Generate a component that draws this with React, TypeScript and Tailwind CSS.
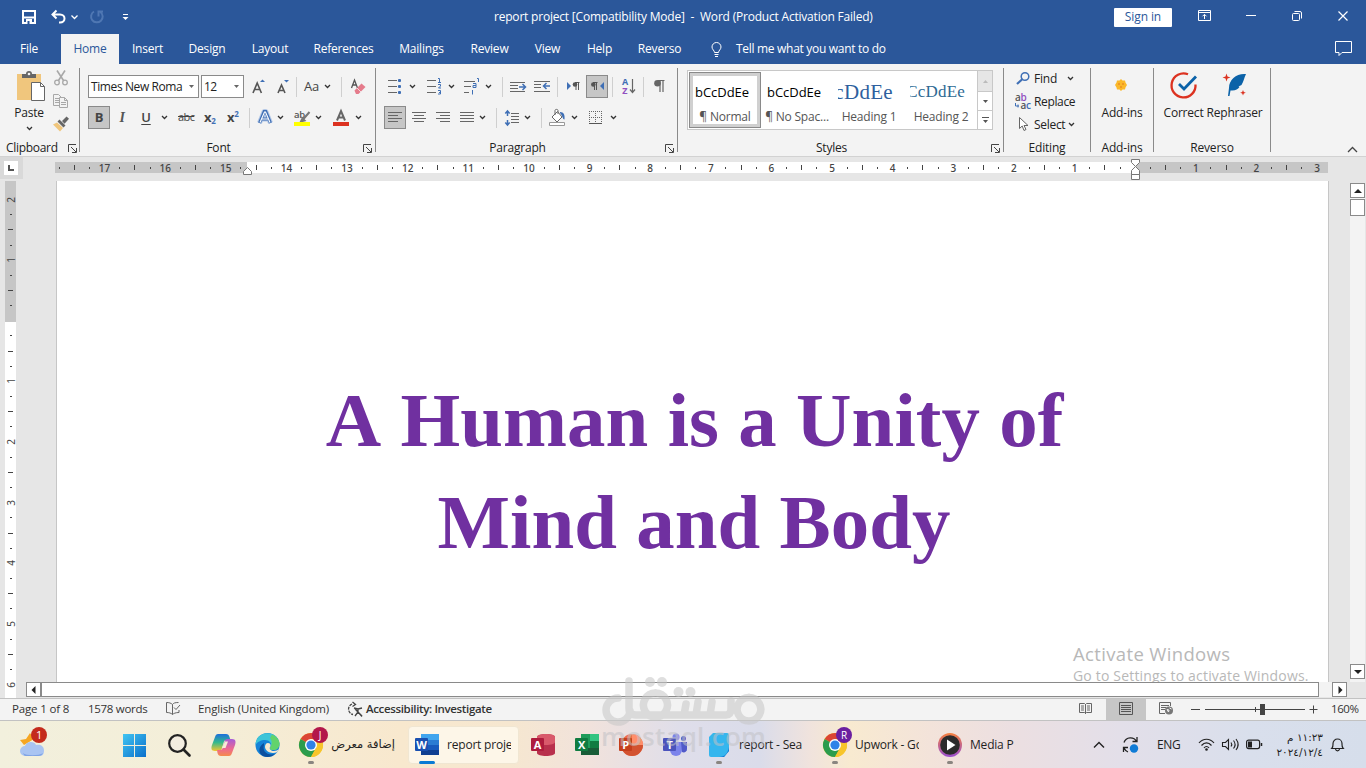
import type { ReactNode } from 'react';
import { clsx } from 'clsx';

interface IconProps {
    w: number;
    h: number;
    className?: string;
    children: ReactNode;
}

function Icon({ w, h, className, children }: IconProps) {
    return (
        <svg width={w} height={h} viewBox={`0 0 ${w} ${h}`} fill="none" className={clsx('shrink-0 overflow-visible', className)}>
            {children}
        </svg>
    );
}

function Chevron({ className }: { className?: string }) {
    return (
        <Icon w={7} h={5} className={className}>
            <path d="M1 1l2.500 2.500L6 1" stroke="#333" strokeWidth="1.300" />
        </Icon>
    );
}

function Sep({ className }: { className?: string }) {
    return <div className={clsx('h-[20px] w-px shrink-0 bg-[#cfcfcf]', className)} />;
}

function GroupEdge() {
    return <div className="mt-[4px] h-[84px] w-px shrink-0 bg-[#8a8a8a]" />;
}

function Launcher({ className }: { className?: string }) {
    return (
        <Icon w={9} h={9} className={className}>
            <path d="M0.500 8V0.500H8M3 3l5 5M8.500 4v4.500H4" stroke="#444" />
        </Icon>
    );
}

function GroupLabel({ text, launcher }: { text: string; launcher?: boolean }) {
    return (
        <div className="mt-auto flex h-[16px] w-full items-center">
            <span className={clsx('flex-1 text-center', launcher && 'pr-[6px]')}>{text}</span>
            {launcher && <Launcher className="mr-[3px]" />}
        </div>
    );
}

function Lines({ rows, className, w = 14 }: { rows: [number, number][]; className?: string; w?: number }) {
    return (
        <Icon w={w} h={13} className={className}>
            {rows.map(([x, width], i) => (
                <path key={i} d={`M${x} ${i * 3 + 1.5}h${width}`} stroke="#666" />
            ))}
        </Icon>
    );
}

const tabs = [
    { label: 'Insert', width: 'w-[29px]' },
    { label: 'Design', width: 'w-[36px]' },
    { label: 'Layout', width: 'w-[36px]' },
    { label: 'References', width: 'w-[57px]' },
    { label: 'Mailings', width: 'w-[45px]' },
    { label: 'Review', width: 'w-[37px]' },
    { label: 'View', width: 'w-[25px]' },
    { label: 'Help', width: 'w-[25px]' },
    { label: 'Reverso', width: 'w-[41px]' },
];

function TitleBar() {
    return (
        <div className="flex h-[34px] items-center text-white">
            <Icon w={14} h={14} className="ml-[22px]">
                <path d="M1 1h12v12H1z" stroke="#fff" strokeWidth="2" />
                <path d="M2 7.500h10" stroke="#fff" strokeWidth="2" />
                <path d="M4 9h6v5H4z" fill="#fff" />
                <path d="M5.500 11h2v3h-2z" fill="#2b579a" />
            </Icon>
            <Icon w={15} h={14} className="ml-[15px]">
                <path d="M5.500 0.500L1.500 4.500l4 4M2 4.500h7c3 0 4.500 2 4.500 4s-1.500 4-4.500 4H8" stroke="#fff" strokeWidth="2" />
            </Icon>
            <Icon w={7} h={5} className="ml-[5px]">
                <path d="M0.500 0.500l3 3 3-3" stroke="#fff" strokeWidth="1.300" />
            </Icon>
            <Icon w={14} h={14} className="ml-[12px]">
                <path d="M4 1.500A5.800 5.800 0 1 0 10.500 2M8.500 6.500V1.500H13" stroke="#4f77b3" strokeWidth="2" />
            </Icon>
            <Icon w={7} h={7} className="ml-[18px]">
                <path d="M1 0.500h5" stroke="#fff" />
                <path d="M0.500 3h6l-3 3z" fill="#fff" />
            </Icon>
            <span className="ml-[365px] w-[379px] whitespace-pre tracking-[-0.205px]">
                report project [Compatibility Mode]  -  Word (Product Activation Failed)
            </span>
            <div className="ml-[241px] flex h-[19px] w-[58px] items-center justify-center rounded-[1px] bg-white tracking-[-0.1px] text-[#2b579a]">
                Sign in
            </div>
            <Icon w={13} h={11} className="mb-[3px] ml-[26px]">
                <path d="M0.500 0.500h12v10H0.500zM0.500 2.500h12M6.500 9V4.500M4.500 6.300l2-2 2 2" stroke="#fff" />
            </Icon>
            <Icon w={10} h={10} className="mb-[3px] ml-[35px]">
                <path d="M0 4.500h10" stroke="#fff" />
            </Icon>
            <Icon w={10} h={10} className="mb-[3px] ml-[36px]">
                <rect x="0.500" y="2.500" width="7" height="7" rx="1" stroke="#fff" />
                <path d="M2.500 0.500H8A1.500 1.500 0 0 1 9.500 2v5.500" stroke="#fff" />
            </Icon>
            <Icon w={10} h={10} className="mb-[3px] ml-[36px]">
                <path d="M0.500 0.500l9 9M9.500 0.500l-9 9" stroke="#fff" strokeWidth="1.200" />
            </Icon>
        </div>
    );
}

function TabRow() {
    return (
        <div className="flex h-[30px] items-center text-white">
            <span className="ml-[20px] flex w-[18px] justify-center">File</span>
            <div className="mr-[-13px] ml-[23px] flex h-full w-[58px] items-center justify-center bg-[#f3f3f3] text-[#2b579a]">Home</div>
            {tabs.map(tab => (
                <span key={tab.label} className={clsx('ml-[27px] flex justify-center whitespace-nowrap', tab.width)}>
                    {tab.label}
                </span>
            ))}
            <Icon w={11} h={15} className="ml-[31px]">
                <path d="M3.500 10.500C3.500 8.500 1 7.500 1 5a4.500 4.500 0 0 1 9 0c0 2.500-2.500 3.500-2.500 5.500zM3.500 12.500h4M4 14.500h3" stroke="#fff" />
            </Icon>
            <span className="ml-[14px] tracking-[-0.3px] whitespace-nowrap">Tell me what you want to do</span>
            <Icon w={17} h={15} className="mr-[14px] mb-[2px] ml-auto">
                <path d="M0.500 0.500h16v11H7l-3 3v-3H0.500z" stroke="#fff" />
            </Icon>
        </div>
    );
}

function ClipboardGroup() {
    return (
        <div className="flex h-full w-[79px] flex-col">
            <div className="flex h-[70px]">
                <div className="ml-[14px] flex w-[30px] flex-col items-center pt-[7px]">
                    <Icon w={30} h={30} className="ml-[3px]">
                        <path d="M1 3h24v26H1z" fill="#f0c67d" />
                        <path d="M6 3h4a3 3 0 0 1 6 0h4v4H6z" fill="#666" />
                        <circle cx="13" cy="3" r="1.300" fill="#f3f3f3" />
                        <path d="M15.500 11.500h9l4 4v14h-13z" fill="#fff" stroke="#666" />
                        <path d="M24.500 11.500v4h4" stroke="#666" />
                    </Icon>
                    <span className="mt-[4px] leading-[16px]">Paste</span>
                    <Chevron className="mt-[5px]" />
                </div>
                <div className="ml-[9px] flex flex-col pt-[6px]">
                    <Icon w={16} h={16}>
                        <path d="M4 0.500l6.500 10M12 0.500L5.500 10.500" stroke="#a8a8a8" strokeWidth="1.600" />
                        <circle cx="4" cy="12.500" r="2.300" stroke="#a8a8a8" strokeWidth="1.300" />
                        <circle cx="12" cy="12.500" r="2.300" stroke="#a8a8a8" strokeWidth="1.300" />
                    </Icon>
                    <Icon w={16} h={16} className="mt-[7px]">
                        <path d="M0.500 1.500h5l3 3v8h-8zM2 5.500h4M2 7.500h4M2 9.500h4" fill="#f3f3f3" stroke="#a8a8a8" />
                        <path d="M6.500 4.500h5l3 3v7h-8zM11.500 4.500v3h3M8 9.500h5M8 11.500h5" fill="#f3f3f3" stroke="#a8a8a8" />
                    </Icon>
                    <Icon w={17} h={16} className="mt-[7px]">
                        <path d="M0 8.500l4-2 6 5.500-3 3.500z" fill="#f0c67d" />
                        <path d="M4.500 5.500l2-2 6 6-2 2zM9 5l4.500-4.500 2.500 2.300-4.500 5z" fill="#666" />
                    </Icon>
                </div>
            </div>
            <div className="mt-auto flex h-[16px] items-center">
                <span className="ml-[6px] w-[51px] tracking-[-0.3px] whitespace-nowrap">Clipboard</span>
                <Launcher className="ml-[11px]" />
            </div>
        </div>
    );
}

function FontGroup() {
    return (
        <div className="flex h-full w-[295px] flex-col pt-[11px]">
            <div className="ml-[8px] flex h-[23px] items-center">
                <div className="flex h-[23px] w-[111px] items-center justify-between border border-[#8a8a8a] bg-white pr-[4px] pl-[2px]">
                    <span className="tracking-[-0.4px] whitespace-nowrap">Times New Roma</span>
                    <Icon w={5} h={3}><path d="M0 0h5L2.500 3z" fill="#666" /></Icon>
                </div>
                <div className="ml-[2px] flex h-[23px] w-[43px] items-center justify-between border border-[#8a8a8a] bg-white pr-[4px] pl-[2px]">
                    <span className="tracking-[-0.6px]">12</span>
                    <Icon w={5} h={3}><path d="M0 0h5L2.500 3z" fill="#666" /></Icon>
                </div>
                <Icon w={14} h={15} className="ml-[8px]">
                    <path d="M1 14l4.200-10 4.200 10M2.500 10.500h5.500" stroke="#555" strokeWidth="1.600" />
                    <path d="M8 3l2.500-2.500L13 3z" fill="#3f6fb5" />
                </Icon>
                <Icon w={14} h={15} className="ml-[11px]">
                    <path d="M1 14l3.500-8L8 14M2.300 11.500h4.500" stroke="#555" strokeWidth="1.600" />
                    <path d="M7 1l2.500 2.500L12 1z" fill="#3f6fb5" />
                </Icon>
                <Sep className="ml-[5px]" />
                <span className="ml-[7px] w-[16px] text-[13px] text-[#444]">Aa</span>
                <Chevron className="ml-[4px]" />
                <Sep className="ml-[10px]" />
                <Icon w={15} h={16} className="ml-[9px]">
                    <path d="M0.500 9L3.500 1l3 8M1.500 6h4" stroke="#555" strokeWidth="1.300" />
                    <path d="M3.500 11.500L10.500 4.500l4 3.500-7 7H5z" fill="#e57b8b" />
                    <path d="M6 9l4 4" stroke="#f3f3f3" strokeWidth="0.800" />
                </Icon>
            </div>
            <div className="mt-[8px] ml-[8px] flex h-[23px] items-center text-[#444]">
                <div className="flex h-[23px] w-[22px] items-center justify-center border border-[#8a8a8a] bg-[#c6c6c6] text-[13px] font-bold">B</div>
                <span className="w-[24px] text-center font-['Liberation_Serif',serif] text-[14px] font-bold italic text-[#555]">I</span>
                <span className="w-[24px] text-center text-[13px] font-semibold underline underline-offset-2">U</span>
                <Chevron className="ml-[3px]" />
                <span className="ml-[10px] w-[18px] text-[11px] tracking-[-0.6px] line-through">abc</span>
                <span className="ml-[8px] flex w-[16px] text-[13px] font-bold">
                    x<span className="mt-[9px] text-[8px] leading-[8px] text-[#3f6fb5]">2</span>
                </span>
                <span className="ml-[7px] flex w-[16px] text-[13px] font-bold">
                    x<span className="mt-[2px] text-[8px] leading-[8px] text-[#3f6fb5]">2</span>
                </span>
                <Sep className="ml-[6px]" />
                <Icon w={16} h={16} className="mb-px ml-[7px]">
                    <path d="M2.500 14L7.200 2.500h1.600l4.700 11.500M4.500 10h7" stroke="#b4c8e6" strokeWidth="5" strokeLinejoin="round" />
                    <path d="M2.500 14L7.200 2.500h1.600l4.700 11.500M4.500 10h7" stroke="#3f6fb5" strokeWidth="3" />
                    <path d="M3 13.500L7.500 3h1l4.500 10.500M4.500 10h7" stroke="#fff" strokeWidth="1.100" />
                </Icon>
                <Chevron className="ml-[4px]" />
                <Icon w={17} h={16} className="ml-[10px]">
                    <text x="0" y="8" fontSize="9.500" fontWeight="600" fill="#555" fontFamily="Open Sans">ab</text>
                    <path d="M15.500 2L9 9.500M8.500 8.500l2 2-3.500 1z" stroke="#777" strokeWidth="2" />
                    <path d="M0 12h16v4H0z" fill="#ff0" />
                </Icon>
                <Chevron className="ml-[4px]" />
                <Icon w={16} h={16} className="ml-[11px]">
                    <path d="M4 10.500L8 1l4 9.500M5.500 7.500h5" stroke="#666" strokeWidth="2" />
                    <path d="M0 12h16v4H0z" fill="#dc3220" />
                </Icon>
                <Chevron className="ml-[6px]" />
            </div>
            <GroupLabel text="Font" launcher />
        </div>
    );
}

function ParagraphGroup() {
    return (
        <div className="flex h-full w-[301px] flex-col pt-[11px]">
            <div className="ml-[8px] flex h-[23px] items-center">
                <Icon w={16} h={17} className="ml-[4px]">
                    <path d="M0 2.500h9M0 8.500h9M0 14.500h9" stroke="#666" />
                    <path d="M10 1.500h3v2h-3zM10.500 1h2v3h-2zM10 7.500h3v2h-3zM10.500 7h2v3h-2zM10 13.500h3v2h-3zM10.500 13h2v3h-2z" fill="#3f6fb5" />
                </Icon>
                <Chevron className="ml-[5px]" />
                <Icon w={16} h={17} className="ml-[11px]">
                    <path d="M0 2.500h9M0 8.500h9M0 14.500h9" stroke="#666" />
                    <path d="M11 0.500h1.500V4.500M11 4.500h3M11 6.500h2.500v1.500l-2 2h2.500M11 12.500h2.500v3.500h-2.500M12 14.500h1.500" stroke="#3f6fb5" />
                </Icon>
                <Chevron className="ml-[5px]" />
                <Icon w={17} h={17} className="ml-[9px]">
                    <path d="M0 3.500h11M0 8.500h7M0 14.500h5" stroke="#666" />
                    <path d="M13 0.500h1.500V4M9 5.500h3v4H9v-2h3M8.500 12v4.500" stroke="#3f6fb5" />
                </Icon>
                <Chevron className="ml-[4px]" />
                <Sep className="ml-[10px]" />
                <Icon w={17} h={13} className="ml-[7px]">
                    <path d="M0 2.500h15M0 5.500h8M0 8.500h8M0 11.500h15" stroke="#666" />
                    <path d="M9 7h6M12.500 4l3 3-3 3" stroke="#3f6fb5" strokeWidth="1.500" />
                </Icon>
                <Icon w={17} h={13} className="ml-[7px]">
                    <path d="M0 1.500h16M0 4.500h7M0 7.500h7M0 11.500h16" stroke="#666" />
                    <path d="M10 6h6M12.500 3l-3 3 3 3" stroke="#3f6fb5" strokeWidth="1.500" />
                </Icon>
                <Sep className="ml-[6px]" />
                <Icon w={14} h={9} className="ml-[9px]">
                    <path d="M0 0v8l4-4z" fill="#3f6fb5" />
                    <path d="M12.500 0.500H8M9 0v8M11.500 0v8" stroke="#555" />
                    <circle cx="8" cy="2.500" r="2.300" fill="#555" />
                </Icon>
                <div className="ml-[5px] flex h-[23px] w-[22px] items-center justify-center border border-[#8a8a8a] bg-[#c6c6c6]">
                    <Icon w={13} h={9}>
                        <path d="M13 0v8L9 4z" fill="#3f6fb5" />
                        <path d="M6.500 0.500H2M3.500 0v8M5.500 0v8" stroke="#555" />
                        <circle cx="2.300" cy="2.500" r="2.300" fill="#555" />
                    </Icon>
                </div>
                <Sep className="ml-[4px]" />
                <Icon w={14} h={16} className="mb-px ml-[9px]">
                    <text x="0" y="7" fontSize="9" fontWeight="700" fill="#3f6fb5" fontFamily="Open Sans">A</text>
                    <text x="0.200" y="15.500" fontSize="9" fontWeight="700" fill="#9150c0" fontFamily="Open Sans">Z</text>
                    <path d="M10.500 1v13M8 11.500l2.500 3 2.500-3" stroke="#666" strokeWidth="1.200" />
                </Icon>
                <Sep className="ml-[7px]" />
                <Icon w={11} h={13} className="ml-[10px]">
                    <path d="M10.500 0.500H4M6 0v12M9 0v12" stroke="#666" strokeWidth="1.200" />
                    <circle cx="3.500" cy="3.300" r="3.300" fill="#666" />
                </Icon>
            </div>
            <div className="mt-[8px] ml-[8px] flex h-[23px] items-center">
                <div className="flex h-[23px] w-[22px] items-center justify-center border border-[#8a8a8a] bg-[#c6c6c6]">
                    <Lines rows={[[0, 14], [0, 10], [0, 14], [0, 10]]} />
                </div>
                <Lines className="ml-[6px]" rows={[[0, 14], [2, 10], [0, 14], [2, 10]]} />
                <Lines className="ml-[10px]" rows={[[0, 14], [4, 10], [0, 14], [4, 10]]} />
                <Lines className="ml-[10px]" rows={[[0, 14], [0, 14], [0, 14], [0, 14]]} />
                <Chevron className="ml-[5px]" />
                <Sep className="ml-[10px]" />
                <Icon w={15} h={16} className="ml-[8px]">
                    <path d="M2.500 1v5M2.500 10v5M0.300 3.500l2.200-2.500 2.200 2.500M0.300 12.500l2.200 2.500 2.200-2.500" stroke="#3f6fb5" strokeWidth="1.500" />
                    <path d="M6 3.500h8M6 6.500h8M6 9.500h8M6 12.500h8" stroke="#666" />
                </Icon>
                <Chevron className="ml-[4px]" />
                <Sep className="ml-[10px]" />
                <Icon w={17} h={17} className="ml-[7px]">
                    <path d="M3 8l5.500-5.500L13 8l-5 5zM6 6V1.500c0-1.500 3-1.500 3 0V5" stroke="#666" fill="#fff" />
                    <path d="M11 3c4 0 5 3 4.500 7.500-2 0-1.500-3.500-4.500-6.500z" fill="#3f6fb5" />
                    <path d="M0.500 13.500h15v3H0.500z" fill="#fff" stroke="#999" />
                </Icon>
                <Chevron className="ml-[5px]" />
                <Icon w={13} h={14} className="ml-[11px]">
                    <path d="M0.500 0v12M6.500 0v12M12.500 0v12M0 0.500h13M0 6.500h13" stroke="#666" strokeDasharray="1 1" />
                    <path d="M0 12.500h13" stroke="#555" />
                </Icon>
                <Chevron className="ml-[8px]" />
            </div>
            <GroupLabel text="Paragraph" launcher />
        </div>
    );
}

const styleItems = [
    { preview: 'bCcDdEe', label: '¶ Normal', look: 'text-[13px] text-black tracking-[-0.05px]' },
    { preview: 'bCcDdEe', label: '¶ No Spac...', look: 'text-[13px] text-black tracking-[-0.05px]' },
    { preview: 'cDdEe', label: 'Heading 1', look: "font-['Liberation_Serif',serif] text-[21px] text-[#2e5f9e] tracking-[0.3px]" },
    { preview: 'CcDdEe', label: 'Heading 2', look: "font-['Liberation_Serif',serif] text-[17px] text-[#2e6a94] tracking-[0.2px]" },
];

function StylesGroup() {
    return (
        <div className="flex h-full w-[325px] flex-col pt-[6px]">
            <div className="ml-[9px] flex h-[60px] w-[306px] border border-[#c8c8c8] bg-white">
                {styleItems.map((item, i) => (
                    <div
                        key={item.label}
                        className={clsx(
                            'mt-px flex h-[56px] w-[72px] shrink-0 flex-col items-center border',
                            i === 0 ? 'ml-px border-[#8a8a8a] shadow-[inset_0_0_0_3px_#d0d0d0]' : 'border-transparent',
                        )}
                    >
                        <div className="mt-[6px] ml-[4px] flex h-[26px] w-[55px] items-center justify-end self-start overflow-hidden whitespace-nowrap">
                            <span className={clsx('leading-[26px]', item.look)}>{item.preview}</span>
                        </div>
                        <span className="pt-[2px] leading-[20px] whitespace-nowrap text-[#555]">{item.label}</span>
                    </div>
                ))}
                <div className="ml-auto flex w-[15px] flex-col border-l border-[#c8c8c8]">
                    <div className="flex h-[20px] items-center justify-center bg-[#e6e6e6]">
                        <Icon w={5} h={3}><path d="M0 3h5L2.500 0z" fill="#bbb" /></Icon>
                    </div>
                    <div className="flex h-[20px] items-center justify-center border-y border-[#c8c8c8]">
                        <Icon w={5} h={3}><path d="M0 0h5L2.500 3z" fill="#555" /></Icon>
                    </div>
                    <div className="flex h-[18px] items-center justify-center">
                        <Icon w={7} h={6}><path d="M0 0h7v1H0zM1 3h5L3.500 6z" fill="#555" /></Icon>
                    </div>
                </div>
            </div>
            <GroupLabel text="Styles" launcher />
        </div>
    );
}

function EditingGroup() {
    return (
        <div className="flex h-full w-[86px] flex-col pt-[3px]">
            <div className="flex h-[23px] items-center">
                <Icon w={14} h={13} className="ml-[12px]">
                    <circle cx="9" cy="4.500" r="3.800" stroke="#3f6fb5" strokeWidth="1.500" />
                    <path d="M6.500 7L1 12" stroke="#3f6fb5" strokeWidth="2.200" />
                </Icon>
                <span className="ml-[4px] w-[23px]">Find</span>
                <Chevron className="ml-[10px]" />
            </div>
            <div className="flex h-[23px] items-center">
                <Icon w={17} h={16} className="ml-[11px]">
                    <text x="0" y="7" fontSize="10" fontWeight="600" fill="#555" fontFamily="Open Sans">a</text>
                    <text x="5.500" y="7" fontSize="10" fontWeight="600" fill="#9150c0" fontFamily="Open Sans">b</text>
                    <text x="5.500" y="14.500" fontSize="10" fontWeight="600" fill="#555" fontFamily="Open Sans">a</text>
                    <text x="11" y="14.500" fontSize="10" fontWeight="600" fill="#3f6fb5" fontFamily="Open Sans">c</text>
                    <path d="M0.500 9v3H4M3 10.500v3" stroke="#3f6fb5" />
                </Icon>
                <span className="ml-[2px] tracking-[-0.35px]">Replace</span>
            </div>
            <div className="flex h-[23px] items-center">
                <Icon w={10} h={15} className="ml-[15px]">
                    <path d="M0.500 0.500v11l2.700-2.500L5 13.500l2-1L5 8.500h4z" fill="#fff" stroke="#666" />
                </Icon>
                <span className="ml-[5px] w-[31px] tracking-[-0.3px]">Select</span>
                <Chevron className="ml-[3px]" />
            </div>
            <GroupLabel text="Editing" />
        </div>
    );
}

function AddInsGroup() {
    return (
        <div className="flex h-full w-[62px] flex-col items-center">
            <div className="flex h-[41px] items-center pr-[2px]">
                <Icon w={12} h={12}>
                    <path d="M6 0l1.500 1.500L10 1.500l.5 2L12 6l-1.500 2.500-.5 2-2.500 0L6 12l-1.500-1.500H2l-.5-2L0 6l1.500-2.500.5-2h2.500z" fill="#fbb829" />
                    <circle cx="4" cy="5" r="0.800" fill="#e2711d" />
                    <circle cx="8" cy="5" r="0.800" fill="#e2711d" />
                    <circle cx="6" cy="8" r="0.800" fill="#e2711d" />
                </Icon>
            </div>
            <span className="leading-[16px]">Add-ins</span>
            <GroupLabel text="Add-ins" />
        </div>
    );
}

function ReversoGroup() {
    return (
        <div className="flex h-full w-[116px] flex-col">
            <div className="flex">
                <div className="ml-[10px] flex w-[39px] flex-col items-center">
                    <Icon w={28} h={27} className="mt-[8px] ml-px">
                        <path d="M25.500 12.500A12 12 0 1 1 18 2.300" stroke="#dc3220" strokeWidth="2.300" />
                        <path d="M9 12l5 5L26 4.500" stroke="#0b62a8" strokeWidth="2.800" />
                    </Icon>
                    <span className="mt-[6px] leading-[16px]">Correct</span>
                </div>
                <div className="ml-[5px] flex w-[53px] flex-col items-center">
                    <Icon w={24} h={25} className="mt-[9px]">
                        <path d="M23 1C14 0 6 6 6 15l-1 8h1.500l1-5.500c5 .5 7-1 9-3.500l-1-.5 3-1.500c2-3 2.500-7 4.500-11z" fill="#0b62a8" />
                        <path d="M3.500 0.500l1 3 3 1-3 1-1 3-1-3-3-1 3-1zM20 17l.8 2 2 .8-2 .8-.8 2-.8-2-2-.8 2-.8z" fill="#dc3220" />
                    </Icon>
                    <span className="mt-[7px] leading-[16px]">Rephraser</span>
                </div>
            </div>
            <GroupLabel text="Reverso" />
        </div>
    );
}

function Ribbon() {
    return (
        <div className="flex h-[93px] border-b border-[#d2d2d2] bg-[#f3f3f3] text-[#222]">
            <ClipboardGroup />
            <GroupEdge />
            <FontGroup />
            <GroupEdge />
            <ParagraphGroup />
            <GroupEdge />
            <StylesGroup />
            <GroupEdge />
            <EditingGroup />
            <GroupEdge />
            <AddInsGroup />
            <GroupEdge />
            <ReversoGroup />
            <GroupEdge />
            <Icon w={11} h={7} className="mr-[8px] mb-[3px] ml-auto self-end">
                <path d="M1 6l4.500-4.500L10 6" stroke="#444" strokeWidth="1.300" />
            </Icon>
        </div>
    );
}

// every fourth mark is a number, 17 down to 0 and then up to 3
const hMarks = Array.from({ length: 84 }, (_, i) => {
    if (i % 4 === 3) return String(Math.abs(17 - (i - 3) / 4));
    return i % 4 === 1 ? 'tick' : 'dot';
});

const vMarks = Array.from({ length: 33 }, (_, i) => {
    if (i % 4 === 0) return String(Math.abs(2 - i / 4));
    return i % 4 === 2 ? 'tick' : 'dot';
});

function HorizontalRuler() {
    return (
        <div className="flex h-[24px] items-start">
            <div className="flex h-[22px] w-[23px] items-center justify-center bg-[#d9d9d9] pr-px">
                <div className="flex h-[14px] w-[14px] items-center justify-center bg-white">
                    <Icon w={6} h={6}><path d="M1 0v5h5" stroke="#555" strokeWidth="2" /></Icon>
                </div>
            </div>
            <div className="relative mt-[5px] ml-[32px] flex h-[11px] w-[1273px] bg-[linear-gradient(90deg,#c6c6c6_192px,#fff_192px,#fff_1080px,#c6c6c6_1080px)]">
                <div className="ml-[-3.500px] flex h-full w-[1274px] items-center">
                    {hMarks.map((mark, i) => (
                        <div key={i} className="flex w-[15.163px] shrink-0 items-center justify-center font-['Noto_Sans','Open_Sans',sans-serif] text-[10px] leading-none font-medium tracking-normal text-[#444]">
                            {mark === 'dot' && <div className="h-[2px] w-px bg-[#444]" />}
                            {mark === 'tick' && <div className="h-[5px] w-px bg-[#444]" />}
                            {mark !== 'dot' && mark !== 'tick' && mark !== '0' && mark}
                        </div>
                    ))}
                </div>
                <Icon w={9} h={8} className="absolute top-[5px] left-[188px]">
                    <path d="M0.500 7.500v-3l4-4 4 4v3z" fill="#fff" stroke="#777" />
                </Icon>
                <Icon w={9} h={22} className="absolute top-[-3px] left-[1076px]">
                    <path d="M0.500 0.500h8v3l-4 4-4-4z" fill="#fff" stroke="#777" />
                    <path d="M0.500 15.500v-4l4-4 4 4v4zM0.500 15.500h8v5h-8z" fill="#fff" stroke="#777" />
                </Icon>
            </div>
        </div>
    );
}

function VerticalRuler() {
    return (
        <div className="ml-[5px] flex h-[517px] w-[11px] flex-col items-center overflow-hidden bg-[linear-gradient(180deg,#c6c6c6_141px,#fff_141px)] pt-[11px]">
            {vMarks.map((mark, i) => (
                <div key={i} className="flex h-[15.163px] shrink-0 items-center justify-center font-['Noto_Sans','Open_Sans',sans-serif] text-[10px] leading-none tracking-normal text-[#444]">
                    {mark === 'dot' && <div className="h-px w-[2px] bg-[#444]" />}
                    {mark === 'tick' && <div className="h-px w-[5px] bg-[#444]" />}
                    {mark !== 'dot' && mark !== 'tick' && mark !== '0' && <span className="-rotate-90">{mark}</span>}
                </div>
            ))}
        </div>
    );
}

function ScrollButton({ d, className }: { d: string; className?: string }) {
    return (
        <div className={clsx('flex h-[15px] w-[15px] shrink-0 items-center justify-center border border-[#8a8a8a] bg-white', className)}>
            <Icon w={8} h={8}><path d={d} fill="#222" /></Icon>
        </div>
    );
}

function Workspace() {
    return (
        <div className="flex h-[517px]">
            <VerticalRuler />
            <div className="flex w-[1350px] flex-col">
                <div className="flex h-[501px]">
                    <div className="relative ml-[40px] w-[1273px] overflow-hidden border-x border-[#c6c6c6] bg-white pt-[189px]">
                        <h1 className="ml-[7px] text-center font-['Liberation_Serif','Times_New_Roman',serif] text-[76.8px] leading-[102px] font-bold text-[#7030a0] [font-kerning:none]">
                            <span className="mr-[3px] tracking-[0.080px]">A Human is a Unity of</span>
                            <br />
                            <span className="mr-[4px] tracking-[0.060px]">Mind and Body</span>
                        </h1>
                        <div className="absolute top-[460px] left-[1016px] whitespace-nowrap text-[#b8b8b8]">
                            <div className="text-[18.500px] leading-[25px] tracking-[0.350px]">Activate Windows</div>
                            <div className="text-[14px] leading-[20px] tracking-[0.180px]">Go to Settings to activate Windows.</div>
                        </div>
                    </div>
                    <div className="mt-[2px] ml-[21px] flex w-[15px] flex-col bg-[#f3f3f3]">
                        <ScrollButton d="M0 6l4-4 4 4z" />
                        <div className="mt-px h-[17px] border border-[#8a8a8a] bg-white" />
                        <ScrollButton d="M0 2h8L4 6z" className="mt-auto mb-[3px]" />
                    </div>
                </div>
                <div className="flex h-[16px] items-start">
                    <ScrollButton d="M5.500 0v8l-4-4z" className="ml-[10px]" />
                    <div className="h-[15px] w-[1278px] border border-[#8a8a8a] bg-white" />
                    <div className="h-[15px] w-[13px] bg-[#f3f3f3]" />
                    <ScrollButton d="M2.500 0v8l4-4z" />
                </div>
            </div>
        </div>
    );
}

function StatusBar() {
    return (
        <div className="flex h-[23px] items-center border-y border-[#c2c2c2] bg-[#f3f3f3] text-[11.500px] tracking-[-0.15px] whitespace-nowrap text-[#333]">
            <span className="mb-px ml-[12px] w-[57px]">Page 1 of 8</span>
            <span className="mb-px ml-[19px] w-[59px] tracking-[-0.3px]">1578 words</span>
            <Icon w={15} h={13} className="mb-[2px] ml-[19px]">
                <path d="M6.500 2.500C5 1 3 0.500 0.500 0.500v10c2.500 0 4.500.5 6 2zm0 0C7.500 1 9 0.500 12.500 0.500M6.500 12.500c1-1 3-2 6.500-2V8M8 5.500l2 2 4-4.500" stroke="#666" />
            </Icon>
            <span className="mb-px ml-[17px] w-[131px]">English (United Kingdom)</span>
            <Icon w={16} h={15} className="ml-[18px]">
                <path d="M5 2A5.500 5.500 0 0 0 6 12.500" stroke="#444" strokeWidth="1.300" strokeDasharray="3 1" />
                <path d="M5.500 0l3 2.500-3 2M7 6l4 1 4-1M11 7v3l-3 4M11 10l4 4.500M8 7l7 7" stroke="#444" strokeWidth="1.300" />
            </Icon>
            <span className="mb-px ml-[3px] w-[126px] font-semibold tracking-[-0.35px]">Accessibility: Investigate</span>
            <Icon w={13} h={13} className="mb-[2px] ml-[587px]">
                <path d="M0.500 1.500h5l1 1 1-1h5v9h-5l-1 1-1-1h-5zM6.500 2v10M2 4h3M2 6h3M2 8h3M8 4h3M8 6h3M8 8h3" stroke="#666" />
            </Icon>
            <div className="ml-[14px] flex h-full w-[40px] items-center justify-center bg-[#c6c6c6]">
                <Icon w={14} h={13} className="mb-[2px]">
                    <path d="M0.500 0.500h13v12H0.500zM2 3.500h10M2 5.500h10M2 7.500h10M2 9.500h10" stroke="#555" />
                </Icon>
            </div>
            <Icon w={15} h={13} className="mb-[2px] ml-[13px]">
                <path d="M6 11.500H0.500v-11h11V4M2 3.500h8M2 5.500h5M2 7.500h4" stroke="#666" />
                <circle cx="10" cy="8.500" r="4" fill="#777" />
                <path d="M8 7.500l2 .5-.5 2zM10.500 6l2 1" stroke="#f3f3f3" />
            </Icon>
            <div className="mb-px ml-[17px] h-px w-[9px] bg-[#444]" />
            <div className="relative ml-[5px] flex h-[11px] w-[100px] items-center">
                <div className="h-px w-full bg-[#444]" />
                <div className="absolute top-[3px] left-[50px] h-[5px] w-px bg-[#444]" />
                <div className="absolute top-0 left-[55px] h-[11px] w-[5px] bg-[#444]" />
            </div>
            <Icon w={9} h={9} className="mb-px ml-[4px]"><path d="M4.500 0.500v8M0.500 4.500h8" stroke="#444" /></Icon>
            <span className="mb-px ml-[13px] tracking-[-0.4px]">160%</span>
        </div>
    );
}

function Chrome() {
    return (
        <Icon w={24} h={24}>
            <circle cx="12" cy="12" r="12" fill="#f7c52b" />
            <path d="M12 12L1.600 6A12 12 0 0 1 22.400 6z" fill="#dc4534" />
            <path d="M12 12L1.600 6A12 12 0 0 0 12 24l5-9z" fill="#2b9c4d" />
            <path d="M12 6h10.400A12 12 0 0 1 12 24l5-9z" fill="#f7c52b" />
            <circle cx="12" cy="12" r="6" fill="#fff" />
            <circle cx="12" cy="12" r="4.600" fill="#2f82e8" />
        </Icon>
    );
}

function OfficeApp({ letter, badge, children }: { letter: string; badge: string; children: ReactNode }) {
    return (
        <Icon w={24} h={24}>
            {children}
            <rect x="0" y="5" width="13" height="13" rx="1" fill={badge} />
            <text x="6.500" y="15.500" textAnchor="middle" fontSize="11" fontWeight="700" fill="#fff" fontFamily="Open Sans">{letter}</text>
        </Icon>
    );
}

function Running({ children, className }: { children: ReactNode; className?: string }) {
    return (
        <div className={clsx('relative h-[24px] shrink-0', className)}>
            {children}
            <div className="absolute top-[28px] left-1/2 h-[3px] w-[6px] -translate-x-1/2 rounded-full bg-[#8a8580]" />
        </div>
    );
}

function Badge({ text, className }: { text: string; className: string }) {
    return (
        <div className={clsx('absolute flex h-[16px] w-[16px] items-center justify-center rounded-full text-[10px] leading-none text-white', className)}>
            {text}
        </div>
    );
}

function TaskBar() {
    return (
        <div className="flex h-[47px] items-center bg-[linear-gradient(90deg,#f2f0dd_0px,#f4eed8_200px,#f8e8ce_400px,#f6e7d0_510px,#f1e2dc_590px,#dfdeea_680px,#dadcea_760px,#f0e3dd_810px,#f8ead0_850px,#f3e3da_930px,#ecdfe1_1010px,#e3dfe9_1120px,#d9dfec_1250px,#d6deeb_1366px)] text-[12px] whitespace-nowrap text-[#1f1f1f]">
            <div className="relative ml-[20px] h-[24px] w-[25px]">
                <Icon w={25} h={24}>
                    <path d="M4 12L0 7l6-1 4-6 4 6z" fill="#f5a623" />
                    <path d="M5 23a5 5 0 0 1 0-10c1-5 10-5 11-1 4-1 8 1 8 5.500S22 23 19 23z" fill="#a9c4f2" />
                    <path d="M3 20c3 3 16 3 20 0-1 2-2 3-5 3H6c-2 0-2-1-3-3z" fill="#7fa3e4" />
                </Icon>
                <Badge text="1" className="-top-[6px] left-[11px] bg-[#c42b1c] text-[11px]" />
            </div>
            <Icon w={24} h={24} className="ml-[78px]">
                <defs>
                    <linearGradient id="win" x1="0" y1="0" x2="1" y2="1">
                        <stop offset="0" stopColor="#41c5f2" />
                        <stop offset="1" stopColor="#0b6fcb" />
                    </linearGradient>
                </defs>
                <path d="M0 1h11v11H0zM12 1h11v11H12zM0 13h11v11H0zM12 13h11v11H12z" fill="url(#win)" />
            </Icon>
            <Icon w={23} h={24} className="ml-[21px]">
                <circle cx="9.500" cy="10.500" r="8.300" stroke="#222" strokeWidth="2.200" fill="#f3ede0" />
                <path d="M15.500 16.500l6 6" stroke="#222" strokeWidth="2.600" strokeLinecap="round" />
            </Icon>
            <Icon w={25} h={24} className="ml-[20px]">
                <defs>
                    <linearGradient id="cpa" x1="0" y1="0" x2="0" y2="1">
                        <stop offset="0" stopColor="#1d6fdc" />
                        <stop offset="0.500" stopColor="#35b98c" />
                        <stop offset="1" stopColor="#f4c430" />
                    </linearGradient>
                    <linearGradient id="cpb" x1="0" y1="0" x2="0" y2="1">
                        <stop offset="0" stopColor="#a65bd8" />
                        <stop offset="0.600" stopColor="#ee6a8e" />
                        <stop offset="1" stopColor="#f58a4b" />
                    </linearGradient>
                </defs>
                <path d="M7 1h8c2 0 3 1 3.500 3l1 3h-4c-2 0-2.500 1-3 3L11 15c-.5 2-1 3-3 3H4c-4 0-4-3-3-6L4 4c.6-2 1.500-3 3-3z" fill="url(#cpa)" />
                <path d="M18 23h-8c-2 0-3-1-3.500-3L6 17h3c2 0 2.500-1 3-3l1.500-5c.5-2 1-3 3-3H21c4 0 4 3 3 6l-3 8c-.6 2-1.500 3-3 3z" fill="url(#cpb)" />
                <path d="M14 8.500h3L14.500 15h-3.500z" fill="#f7ecd6" />
            </Icon>
            <Icon w={25} h={24} className="ml-[19px]">
                <circle cx="12.500" cy="12" r="12" fill="#1683d8" />
                <path d="M2 6C6-1 18-2 23 6c3 6 0 11-5 11-3 0-4-2-2-4 1-3-2-6-6-6-4 0-8 2-9.500 5 0-2 .5-4 1.500-6z" fill="#3dc5d8" />
                <path d="M17 1.500c6 2.500 9 8 7 12-1 3-4 3.500-6 3.500-3 0-4-2-2-4 2-5-1-8-1-8z" fill="#62d36b" />
                <path d="M9 12c-2 6 3 11 11 9-3 3-8 4-12 2-5-3-5-9 1-13z" fill="#0c4f9e" />
                <path d="M13 10c3 0 3 3 2 4-1 2 1 4 4 4 2 0 4-1 5-2-1 3-3 4-6 4-4 0-8-3-8-6 0-2 1-4 3-4z" fill="#f8e9d0" />
            </Icon>
            <Running className="ml-[19px] w-[24px]">
                <Chrome />
                <Badge text="J" className="-top-[6px] left-[13px] bg-[#b3174a]" />
            </Running>
            <span dir="rtl" className="ml-[8px] w-[64px] font-['DejaVu_Sans',sans-serif] text-[11.500px] tracking-normal">إضافة معرض</span>
            <div className="ml-[13px] flex h-[38px] w-[111px] items-center rounded-[4px] border border-[#f0e6d2] bg-[#fdf6e8]">
                <div className="relative ml-[6px] h-[24px] w-[24px]">
                    <OfficeApp letter="W" badge="#1a50b0">
                        <path d="M6 1h18v6H6z" fill="#41a5ee" />
                        <path d="M6 7h18v5H6z" fill="#2b7cd3" />
                        <path d="M6 12h18v5H6z" fill="#185abd" />
                        <path d="M6 17h18v5H6z" fill="#103f91" />
                    </OfficeApp>
                    <div className="absolute top-[28px] left-[4px] h-[3px] w-[16px] rounded-full bg-[#0a7bd4]" />
                </div>
                <span className="ml-[8px] w-[64px] overflow-hidden">report proje</span>
            </div>
            <div className="ml-[12px] flex gap-[20px]">
                <OfficeApp letter="A" badge="#ae1c3d">
                    <path d="M6 4c0-4 18-4 18 0v16c0 4-18 4-18 0z" fill="#b8304c" />
                    <path d="M6 4c0-4 18-4 18 0v5c0 4-18 4-18 0z" fill="#d95a6b" />
                </OfficeApp>
                <OfficeApp letter="X" badge="#107c41">
                    <path d="M6 1h18v21H6z" fill="#1f9c5a" />
                    <path d="M15 1h9v7h-9z" fill="#33c481" />
                    <path d="M6 15h18v7H6z" fill="#185c37" />
                    <path d="M15 8h9v7h-9z" fill="#107c41" />
                </OfficeApp>
                <OfficeApp letter="P" badge="#c43e1c">
                    <circle cx="13" cy="12" r="11" fill="#ed6c47" />
                    <path d="M13 1a11 11 0 0 1 11 11H13z" fill="#ff8f6b" />
                    <path d="M2 12h22a11 11 0 0 1-22 0z" fill="#d35230" />
                </OfficeApp>
                <OfficeApp letter="T" badge="#4b53bc">
                    <circle cx="13" cy="4" r="3.500" fill="#7b83eb" />
                    <circle cx="20.500" cy="5.500" r="2.500" fill="#5059c9" />
                    <path d="M7 9h12v8a6 6 0 0 1-12 0z" fill="#7b83eb" />
                    <path d="M18 9h6v7c0 3-3 4-5 3z" fill="#5059c9" />
                </OfficeApp>
            </div>
            <Running className="ml-[22px] w-[20px]">
                <Icon w={20} h={24}>
                    <path d="M4 0h14a2 2 0 0 1 2 2v16l-5 6H2a2 2 0 0 1-2-2V4z" fill="#35b6ee" />
                    <path d="M20 14v4l-5 6h-5c6 0 9-4 10-10z" fill="#1678d2" />
                </Icon>
            </Running>
            <span className="ml-[10px] w-[64px]">report - Sea</span>
            <Running className="ml-[20px] w-[24px]">
                <Chrome />
                <Badge text="R" className="-top-[6px] left-[13px] bg-[#6b1fa0]" />
            </Running>
            <span className="ml-[8px] w-[64px] overflow-hidden">Upwork - Go</span>
            <Running className="ml-[19px] w-[24px]">
                <Icon w={24} h={24}>
                    <defs>
                        <linearGradient id="mp" x1="0" y1="0" x2="0" y2="1">
                            <stop offset="0" stopColor="#f5803e" />
                            <stop offset="1" stopColor="#9a4fd0" />
                        </linearGradient>
                    </defs>
                    <circle cx="12" cy="12" r="12" fill="url(#mp)" />
                    <circle cx="12" cy="12" r="9.800" fill="#2b2b2b" />
                    <path d="M9 6.500v11l8.500-5.500z" fill="#fff" />
                </Icon>
            </Running>
            <span className="ml-[8px] w-[44px]">Media P</span>
            <Icon w={12} h={8} className="ml-[79px]">
                <path d="M1 6.500l5-5 5 5" stroke="#222" strokeWidth="1.400" />
            </Icon>
            <Icon w={17} h={18} className="ml-[17px]">
                <path d="M2 6.500c2-6 10-6 12.500-1M15 1v4.500h-4.500M6 16c-1.500-.5-3-2-4-4M1.500 16v-4.500H6" stroke="#222" strokeWidth="1.300" />
                <circle cx="12" cy="12.500" r="4.200" fill="#0f7bd6" />
            </Icon>
            <span className="ml-[18px] w-[24px] tracking-[-0.300px]">ENG</span>
            <Icon w={17} h={13} className="ml-[17px]">
                <path d="M1 5c4-5 11-5 15 0M3.500 7.500c3-3.500 7-3.500 10 0M6 10c1.500-2 3.500-2 5 0" stroke="#222" strokeWidth="1.200" />
                <circle cx="8.500" cy="11.500" r="1.300" fill="#222" />
            </Icon>
            <Icon w={17} h={13} className="ml-[7px]">
                <path d="M0.500 4.500h3l3-3v10l-3-3h-3zM9 4.500c1 1.300 1 2.700 0 4M11.500 2.500c2 2.500 2 5.500 0 8M14 1c2.700 3.500 2.700 7.500 0 11" stroke="#222" strokeWidth="1.100" />
            </Icon>
            <Icon w={17} h={11} className="ml-[7px]">
                <rect x="0.600" y="1.100" width="13" height="8.500" rx="2" stroke="#222" strokeWidth="1.200" />
                <rect x="2" y="2.500" width="4" height="6" fill="#222" />
                <path d="M15.500 4v3" stroke="#222" strokeWidth="1.500" />
            </Icon>
            <div className="ml-[9px] flex w-[51px] flex-col items-end font-['DejaVu_Sans',sans-serif] text-[10.500px] leading-[15px] tracking-[-1px]">
                <span dir="rtl">١١:٢٣ م</span>
                <span>٢٠٢٤/١٢/٤</span>
            </div>
            <Icon w={13} h={15} className="ml-[8px]">
                <path d="M0.800 11.500c1.500-1.500 1.200-3 1.200-5a4.500 4.500 0 0 1 9 0c0 2-.3 3.500 1.200 5zM4.500 12c.5 2.500 3.500 2.500 4 0" stroke="#222" strokeWidth="1.200" />
            </Icon>
        </div>
    );
}

function Watermark() {
    return (
        <div className="pointer-events-none absolute top-[676px] left-[600px] opacity-55">
            <Icon w={168} h={52}>
                <g fill="#c6c6c6">
                    <circle cx="50" cy="6" r="5" />
                    <circle cx="62" cy="6" r="5" />
                    <circle cx="78.500" cy="16" r="5" />
                    <circle cx="90.500" cy="16" r="5" />
                </g>
                <path
                    d="M18 22a12 12 0 1 0 12 13M29 5v27q0 7 7 7h90q5 0 5-7V25M112 26l-2 13M98 26l-2 13M86 28l-2 11M55.500 17a12 12 0 1 1-.1 0M149 21.500a11.800 11.800 0 1 1-.1 0"
                    stroke="#c6c6c6"
                    strokeWidth="7.500"
                    strokeLinecap="round"
                    strokeLinejoin="round"
                />
            </Icon>
            <div className="-mt-[8px] ml-px text-[26px] leading-[32px] font-semibold tracking-[0.200px] text-[#c2c2c6]">mostaql.com</div>
        </div>
    );
}

export default function App() {
    return (
        <div className="relative flex h-[768px] w-[1366px] flex-col overflow-hidden bg-[#e6e6e6] font-['Open_Sans','Noto_Sans',sans-serif] text-[12px] tracking-[-0.2px]">
            <div className="bg-[#2b579a]">
                <TitleBar />
                <TabRow />
            </div>
            <Ribbon />
            <HorizontalRuler />
            <Workspace />
            <StatusBar />
            <TaskBar />
            <Watermark />
        </div>
    );
}
